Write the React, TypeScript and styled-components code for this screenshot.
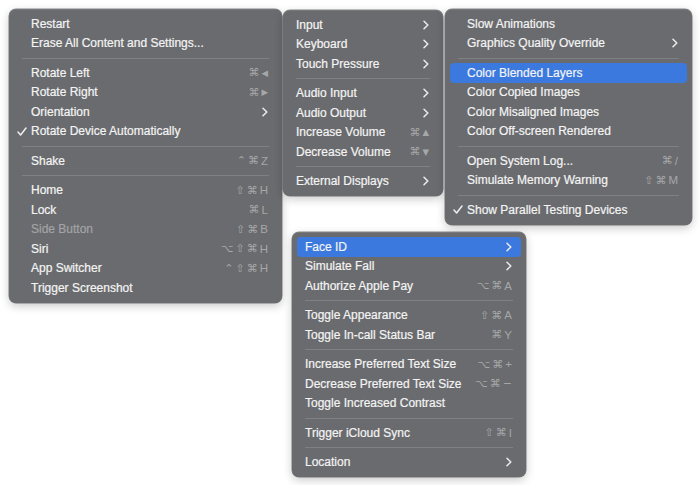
import React from "react";
import styled, { createGlobalStyle } from "styled-components";

const Global = createGlobalStyle`
  html, body { margin: 0; padding: 0; background: #ffffff; }
  body { font-family: "Liberation Sans", Arial, sans-serif; -webkit-font-smoothing: antialiased; }
`;

type Entry =
  | "sep"
  | {
      label: string;
      keys?: string[];
      sub?: boolean;
      checked?: boolean;
      disabled?: boolean;
      active?: boolean;
    };

type MenuDef = { left: number; top: number; width: number; checks: boolean; items: Entry[] };

const menus: MenuDef[] = [
  {
    left: 9,
    top: 9,
    width: 273,
    checks: true,
    items: [
      { label: "Restart" },
      { label: "Erase All Content and Settings..." },
      "sep",
      { label: "Rotate Left", keys: ["⌘", "◀"] },
      { label: "Rotate Right", keys: ["⌘", "▶"] },
      { label: "Orientation", sub: true },
      { label: "Rotate Device Automatically", checked: true },
      "sep",
      { label: "Shake", keys: ["⌃", "⌘", "Z"] },
      "sep",
      { label: "Home", keys: ["⇧", "⌘", "H"] },
      { label: "Lock", keys: ["⌘", "L"] },
      { label: "Side Button", keys: ["⇧", "⌘", "B"], disabled: true },
      { label: "Siri", keys: ["⌥", "⇧", "⌘", "H"] },
      { label: "App Switcher", keys: ["⌃", "⇧", "⌘", "H"] },
      { label: "Trigger Screenshot" },
    ],
  },
  {
    left: 283,
    top: 10,
    width: 160,
    checks: false,
    items: [
      { label: "Input", sub: true },
      { label: "Keyboard", sub: true },
      { label: "Touch Pressure", sub: true },
      "sep",
      { label: "Audio Input", sub: true },
      { label: "Audio Output", sub: true },
      { label: "Increase Volume", keys: ["⌘", "▲"] },
      { label: "Decrease Volume", keys: ["⌘", "▼"] },
      "sep",
      { label: "External Displays", sub: true },
    ],
  },
  {
    left: 445,
    top: 9,
    width: 247,
    checks: true,
    items: [
      { label: "Slow Animations" },
      { label: "Graphics Quality Override", sub: true },
      "sep",
      { label: "Color Blended Layers", active: true },
      { label: "Color Copied Images" },
      { label: "Color Misaligned Images" },
      { label: "Color Off-screen Rendered" },
      "sep",
      { label: "Open System Log...", keys: ["⌘", "/"] },
      { label: "Simulate Memory Warning", keys: ["⇧", "⌘", "M"] },
      "sep",
      { label: "Show Parallel Testing Devices", checked: true },
    ],
  },
  {
    left: 292,
    top: 232,
    width: 234,
    checks: false,
    items: [
      { label: "Face ID", sub: true, active: true },
      { label: "Simulate Fall", sub: true },
      { label: "Authorize Apple Pay", keys: ["⌥", "⌘", "A"] },
      "sep",
      { label: "Toggle Appearance", keys: ["⇧", "⌘", "A"] },
      { label: "Toggle In-call Status Bar", keys: ["⌘", "Y"] },
      "sep",
      { label: "Increase Preferred Text Size", keys: ["⌥", "⌘", "+"] },
      { label: "Decrease Preferred Text Size", keys: ["⌥", "⌘", "−"] },
      { label: "Toggle Increased Contrast" },
      "sep",
      { label: "Trigger iCloud Sync", keys: ["⇧", "⌘", "I"] },
      "sep",
      { label: "Location", sub: true },
    ],
  },
];

const Canvas = styled.div`
  position: relative;
  width: 700px;
  height: 485px;
  overflow: hidden;
  background: #ffffff;
`;

const Menu = styled.div`
  position: absolute;
  box-sizing: border-box;
  display: flex;
  flex-direction: column;
  padding: 5px 5px;
  background: #6a6b6e;
  border-radius: 7px;
  box-shadow: 0 0 0 0.5px rgba(0, 0, 0, 0.45), 0 3px 10px rgba(0, 0, 0, 0.22),
    inset 0 0.5px 0 rgba(255, 255, 255, 0.18);
`;

const Row = styled.div<{ $checks: boolean; $active?: boolean; $disabled?: boolean }>`
  display: flex;
  align-items: center;
  height: 19.5px;
  padding: 0 9px 0 ${(p) => (p.$checks ? 3 : 8)}px;
  border-radius: 4px;
  background: ${(p) => (p.$active ? "#3b79df" : "transparent")};
  color: ${(p) => (p.$disabled ? "#a3a4a6" : "#f4f4f4")};
  font-size: 12px;
  -webkit-text-stroke: 0.2px ${(p) => (p.$disabled ? "#a3a4a6" : "#f4f4f4")};
  white-space: nowrap;
`;

const CheckCol = styled.span`
  width: 14px;
  flex: none;
  display: flex;
  align-items: center;
`;

const Label = styled.span`
  flex: 1;
`;

const Keys = styled.span<{ $active?: boolean }>`
  display: flex;
  align-items: center;
  gap: 2px;
  color: ${(p) => (p.$active ? "#e8eefb" : "#a6a7a9")};
  -webkit-text-stroke: 0;
  font-size: 11.5px;
`;

const Key = styled.span<{ $kind: "sym" | "tri" | "txt" }>`
  font-family: ${(p) => (p.$kind === "txt" ? '"Liberation Sans", Arial, sans-serif' : '"DejaVu Sans", sans-serif')};
  font-size: ${(p) => (p.$kind === "tri" ? "8.5px" : p.$kind === "sym" ? "11px" : "11.5px")};
`;

const Sep = styled.div`
  height: 10px;
  display: flex;
  align-items: center;
  padding: 0 8px;
  &::after {
    content: "";
    flex: 1;
    height: 1px;
    background: #7f8083;
  }
`;

const Chevron = () => (
  <svg width="6" height="10" viewBox="0 0 6 10" style={{ marginLeft: 8 }}>
    <path d="M1 1.2 L4.8 5 L1 8.8" fill="none" stroke="#ececec" strokeWidth="1.5" strokeLinecap="round" strokeLinejoin="round" />
  </svg>
);

const Check = () => (
  <svg width="10" height="9" viewBox="0 0 10 9">
    <path d="M1 5 L3.6 8 L9 1" fill="none" stroke="#eeeeee" strokeWidth="1.5" strokeLinecap="round" strokeLinejoin="round" />
  </svg>
);

const kindOf = (k: string): "sym" | "tri" | "txt" =>
  /^[A-Z\/+]$/.test(k) ? "txt" : /[◀▶▲▼]/.test(k) ? "tri" : "sym";

export default function App() {
  return (
    <>
      <Global />
      <Canvas>
        {menus.map((m, mi) => (
          <Menu key={mi} style={{ left: m.left, top: m.top, width: m.width }}>
            {m.items.map((it, i) =>
              it === "sep" ? (
                <Sep key={i} />
              ) : (
                <Row key={i} $checks={m.checks} $active={it.active} $disabled={it.disabled}>
                  {m.checks && <CheckCol>{it.checked && <Check />}</CheckCol>}
                  <Label>{it.label}</Label>
                  {it.keys && (
                    <Keys $active={it.active}>
                      {it.keys.map((k, ki) => (
                        <Key key={ki} $kind={kindOf(k)}>
                          {k}
                        </Key>
                      ))}
                    </Keys>
                  )}
                  {it.sub && <Chevron />}
                </Row>
              )
            )}
          </Menu>
        ))}
      </Canvas>
    </>
  );
}
